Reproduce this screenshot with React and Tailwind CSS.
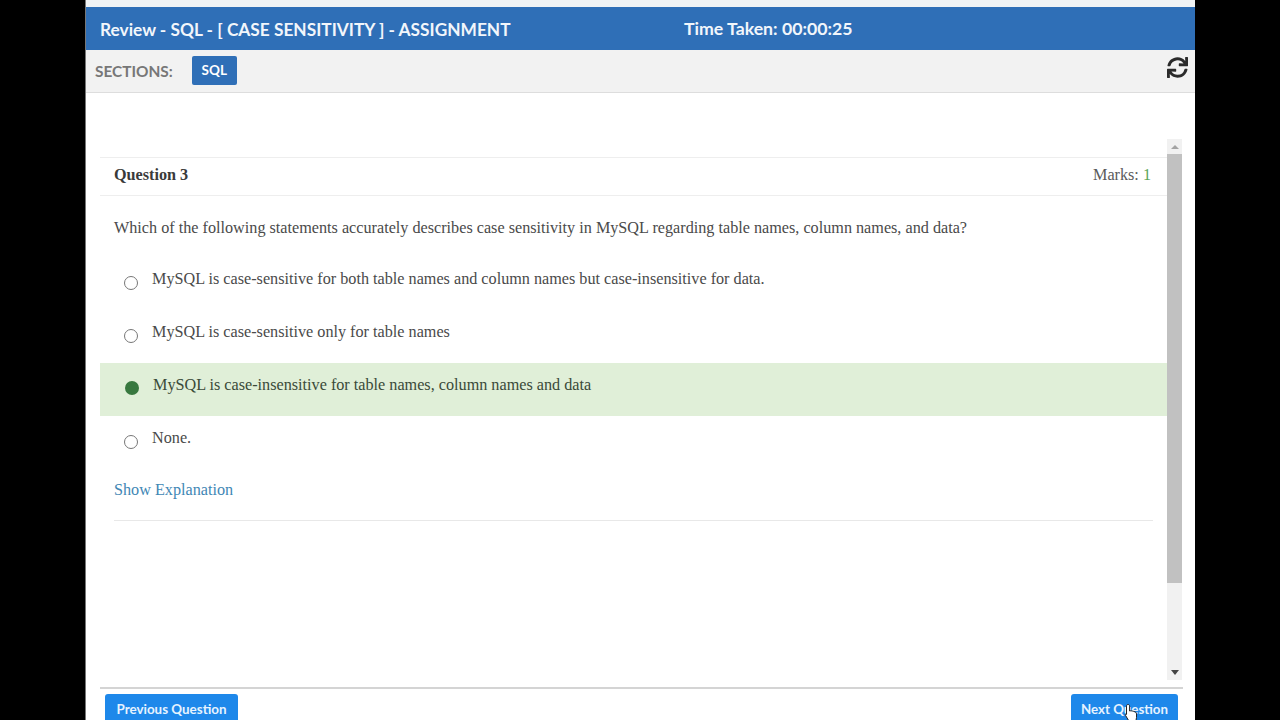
import { FaSync } from 'react-icons/fa';

const serif = "font-['Liberation_Serif',serif]";

const options = [
  { text: 'MySQL is case-sensitive for both table names and column names but case-insensitive for data.' },
  { text: 'MySQL is case-sensitive only for table names' },
  { text: 'MySQL is case-insensitive for table names, column names and data', selected: true },
  { text: 'None.' },
];

function Option({ text, selected }) {
  return (
    <div className={`flex h-[53px] items-start pl-[24px] ${selected ? 'bg-[#e0efd8]' : ''}`}>
      {selected ? (
        <span className="mt-[18px] ml-[1px] h-[14px] w-[14px] shrink-0 rounded-full bg-[#38783f]" />
      ) : (
        <span className="mt-[19px] h-[14px] w-[14px] shrink-0 rounded-full border border-[#777777] bg-white" />
      )}
      <span className={`mt-[10px] ml-[14px] text-[16.2px] leading-[24px] ${selected ? 'text-[#3a4a38]' : 'text-[#4a4a4a]'}`}>
        {text}
      </span>
    </div>
  );
}

function Scrollbar() {
  return (
    <div className="flex w-[15px] shrink-0 flex-col bg-[#f1f1f1]">
      <div className="flex h-[15px] items-center justify-center">
        <span className="h-0 w-0 border-x-[4px] border-b-[4px] border-x-transparent border-b-[#a3a3a3]" />
      </div>
      <div className="h-[429px] bg-[#c1c1c1]" />
      <div className="flex-1" />
      <div className="flex h-[15px] items-center justify-center">
        <span className="h-0 w-0 border-x-[4px] border-t-[5px] border-x-transparent border-t-[#444444]" />
      </div>
    </div>
  );
}

export default function App() {
  return (
    <div className="flex h-[720px] justify-center overflow-hidden bg-black">
      <div className="relative flex w-[1110px] flex-col border-l border-[#777777] bg-white">
        <div className="h-[7px] shrink-0 bg-[#f0f3f5]" />

        <div className="flex h-[43px] shrink-0 items-center bg-[#2f6fb7] pl-[14px] pt-[2px] font-['Lato',sans-serif] font-bold text-[#f2f6fb]">
          <span className="w-[584px] text-[17.3px]">Review - SQL - [ CASE SENSITIVITY ] - ASSIGNMENT</span>
          <span className="text-[17.7px]">Time Taken: 00:00:25</span>
        </div>

        <div className="flex h-[43px] shrink-0 items-center border-b border-[#dddddd] bg-[#f2f2f2] pl-[9px] pr-[7px] font-['Lato',sans-serif]">
          <span className="pt-[1px] text-[15.4px] font-bold text-[#777777]">SECTIONS:</span>
          <span className="mb-[1px] ml-[19px] flex h-[29px] w-[45px] items-center justify-center rounded-[2px] bg-[#2f6fb7] text-[13.5px] font-bold text-white">
            SQL
          </span>
          <FaSync className="mb-[7px] ml-auto text-[21px] text-[#2b2b2b]" />
        </div>

        <div className={`mt-[46px] ml-[14px] flex h-[541px] w-[1082px] shrink-0 ${serif}`}>
          <div className="flex-1 pt-[18px]">
            <div className="flex h-[39px] items-center justify-between border-y border-[#eeeeee] pb-[3px] pl-[14px] pr-[16px] text-[16.2px] text-[#5a5a5a]">
              <span className="font-bold text-[#3a3a3a]">Question 3</span>
              <span>
                Marks: <span className="text-[#5aa55a]">1</span>
              </span>
            </div>
            <p className="mt-[20px] mb-[17px] px-[14px] text-[16.2px] leading-[24px] text-[#4a4a4a]">
              Which of the following statements accurately describes case sensitivity in MySQL regarding table names, column names, and data?
            </p>
            {options.map((opt) => (
              <Option key={opt.text} text={opt.text} selected={opt.selected} />
            ))}
            <div className="mt-[9px] px-[14px] text-[16.2px] leading-[24px] text-[#3f87b5]">Show Explanation</div>
            <div className="mx-[14px] mt-[18px] border-t border-[#e8e8e8]" />
          </div>
          <Scrollbar />
        </div>

        <div className="mt-[7px] ml-[14px] flex h-[33px] w-[1083px] shrink-0 justify-between border-t-2 border-[#d4d4d4] px-[5px] pt-[5px] font-['Lato',sans-serif]">
          <button className="h-[40px] w-[133px] rounded-[3px] bg-[#1e88ea] pb-[9px] text-[13.4px] font-bold text-[#e6f3ff]">
            Previous Question
          </button>
          <button className="h-[40px] w-[107px] rounded-[3px] bg-[#1e88ea] pb-[9px] text-[13.3px] font-bold text-[#e6f3ff]">
            Next Question
          </button>
        </div>

        <svg className="absolute left-[1038px] top-[703px]" width="16" height="20" viewBox="0 0 16 20">
          <path
            d="M4 1.5c1 0 1.6.7 1.6 1.6V8l1-.2 1 .1 1 .2 1 .3 1.5.5c.9.3 1.4 1 1.4 2v3.5L11.8 19H5.5L1.6 12.5c-.5-.8-.2-1.5.5-1.7.5-.2 1 0 .4.6V3.1C2.5 2.2 3 1.5 4 1.5Z"
            fill="#ffffff"
            stroke="#222222"
            strokeWidth="1"
          />
        </svg>
      </div>
    </div>
  );
}
